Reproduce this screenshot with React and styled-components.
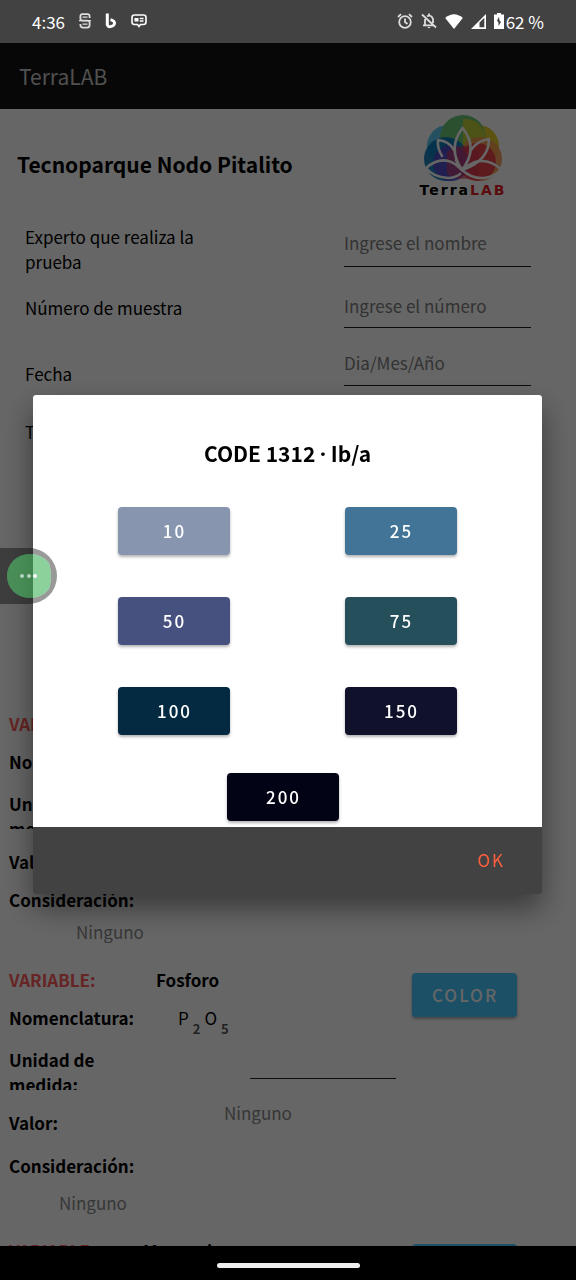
import React from "react";
import styled, { createGlobalStyle } from "styled-components";

const GlobalStyle = createGlobalStyle`
  * { box-sizing: border-box; }
  body { margin: 0; background: #fff; color: #000; font-family: "Noto Sans CJK SC", "Noto Sans", sans-serif; font-size: 17px; line-height: 25px; }
  button, input { font: inherit; }
  p, h1, h2 { margin: 0; }
`;

const Screen = styled.div`
  height: 100vh;
  display: flex;
  flex-direction: column;
  overflow: hidden;
`;

const StatusBar = styled.div`
  position: relative;
  z-index: 3;
  flex: none;
  height: 43px;
  padding: 0 32px 1px;
  display: flex;
  align-items: center;
  justify-content: space-between;
  background: #424242;
  color: #fff;
`;

const StatusGroup = styled.div`
  display: flex;
  align-items: center;
  gap: ${(p) => p.$gap}px;
`;

const Battery = styled.span`
  display: flex;
  align-items: center;
  gap: 2px;
`;

const AppBar = styled.header`
  flex: none;
  height: 66px;
  padding: 0 19px;
  display: flex;
  align-items: center;
  background: #121212;
  color: #c8c8c8;
  font-size: 21px;
`;

const Content = styled.main`
  flex: 1;
  min-height: 0;
  overflow: hidden;
`;

const TitleRow = styled.div`
  height: 110px;
  padding: 5px 70px 0 17px;
  display: flex;
  align-items: flex-start;
  justify-content: space-between;
`;

const Title = styled.h1`
  padding-top: 35px;
  font-size: 21px;
  line-height: 30px;
`;

const Logo = styled.div`
  width: 86px;
  display: flex;
  flex-direction: column;
  align-items: center;
  svg { display: block; }
`;

const LogoText = styled.span`
  font: bold 14px/16px "DejaVu Sans", sans-serif;
  letter-spacing: 2px;
  b { color: #e31b23; }
`;

const FormRow = styled.div`
  height: ${(p) => p.$h}px;
  padding: 0 45px 0 25px;
  display: flex;
  justify-content: space-between;
`;

const FormLabel = styled.label`
  width: 190px;
  padding-top: ${(p) => p.$top}px;
`;

const Field = styled.input`
  width: 187px;
  height: ${(p) => p.$h || 41}px;
  padding: 0 0 ${(p) => p.$bottom || 0}px;
  border: 0;
  border-bottom: 1px solid #222;
  border-radius: 0;
  background: none;
  outline: none;
  &::placeholder { color: #808080; opacity: 1; }
`;

const Variables = styled.div`
  padding-top: 190px;
  display: flex;
  flex-direction: column;
  gap: 16px;
`;

const Variable = styled.section`
  display: grid;
  grid-template-columns: minmax(0, 1fr) 164px;
  align-items: start;
`;

const VarRow = styled.div`
  height: ${(p) => p.$h || 38}px;
  padding: ${(p) => p.$top || 0}px 16px 0 9px;
  display: flex;
  align-items: ${(p) => p.$align || "center"};
  overflow: hidden;
`;

const Term = styled.span`
  flex: none;
  width: ${(p) => p.$w || 147}px;
  font-weight: bold;
  color: ${(p) => (p.$red ? "#ff5a5a" : "#000")};
`;

const UnitLabel = styled.label`
  width: 110px;
  font-weight: bold;
`;

const UnitField = styled(Field)`
  margin-left: auto;
  width: 146px;
  height: 32px;
`;

const Value = styled.span`
  display: block;
  padding-top: 10px;
`;

const Hint = styled.span`
  color: #8a8a8a;
  padding-left: ${(p) => p.$left || 0}px;
`;

const Formula = styled.span`
  padding-left: 22px;
  display: flex;
  gap: 4px;
  sub {
    position: relative;
    top: 11px;
    vertical-align: baseline;
    font-size: 13px;
    font-weight: bold;
    color: #555;
  }
`;

const RaisedButton = styled.button`
  height: ${(p) => p.$h || 48}px;
  width: ${(p) => p.$w || 112}px;
  padding: 0 0 2px 1px;
  border: 0;
  border-radius: 4px;
  background: ${(p) => p.$color};
  color: #fff;
  font-weight: 500;
  letter-spacing: 2px;
  box-shadow: 0 2px 3px rgba(0, 0, 0, 0.3);
`;

const ColorButton = styled(RaisedButton)`
  margin-top: 13px;
`;

const Scrim = styled.div`
  position: fixed;
  inset: 43px 0 34px;
  z-index: 2;
  padding: 0 34px 0 33px;
  display: flex;
  align-items: center;
  background: rgba(0, 0, 0, 0.6);
`;

const Dialog = styled.div`
  width: 100%;
  border-radius: 3px;
  overflow: hidden;
  background: #424242;
  box-shadow: 0 14px 30px rgba(0, 0, 0, 0.45);
`;

const DialogBody = styled.div`
  padding: 43px 0 6px;
  background: #fff;
`;

const DialogTitle = styled.h2`
  font-size: 21px;
  line-height: 30px;
  text-align: center;
`;

const Dot = styled.span`
  font-family: "Noto Sans", sans-serif;
  line-height: 1;
`;

const Swatches = styled.div`
  padding: 39px 85px 38px;
  display: grid;
  grid-template-columns: auto auto;
  justify-content: space-between;
  gap: 42px 0;
`;

const LastSwatch = styled.div`
  display: flex;
  justify-content: center;
  padding-right: 9px;
`;

const DialogActions = styled.div`
  height: 67px;
  padding: 0 29px 2px;
  display: flex;
  align-items: center;
  justify-content: flex-end;
`;

const TextButton = styled.button`
  padding: 8px;
  border: 0;
  background: none;
  color: #ff5f3d;
  letter-spacing: 2px;
`;

const FloatingTool = styled.button`
  position: fixed;
  left: 0;
  top: 548px;
  z-index: 4;
  padding: 0;
  border: 0;
  background: none;
  svg { display: block; }
`;

const NavBar = styled.div`
  flex: none;
  height: 34px;
  padding-top: 4px;
  display: flex;
  align-items: center;
  justify-content: center;
  background: #000;
`;

const NavHandle = styled.div`
  width: 143px;
  height: 5px;
  border-radius: 3px;
  background: #eee;
`;

const StripeS = () => (
  <svg width="12" height="16" viewBox="0 0 12 16" fill="none" stroke="#ddd" strokeWidth="1.8">
    <path d="M10.600 5V3.200Q10.600 1.200 8.600 1.200H3.400Q1.400 1.200 1.400 3.200V5.200Q1.400 7.600 3.600 7.600H8.400Q10.600 7.600 10.600 9.600V12Q10.600 14.600 8 14.600H4Q1.400 14.600 1.400 12V11" />
    <path d="M3.500 4.200h5M0 7.600h12M3.500 11.200h5" strokeWidth="1.200" />
  </svg>
);

const BingB = () => (
  <svg width="12" height="16" viewBox="0 0 12 16" fill="none" stroke="#fff" strokeWidth="3">
    <path d="M2.300.500V12" />
    <path d="M2.300 11Q2.300 14 5.500 13.700 9.600 13 9.600 9.800 9.300 7.700 5.500 6.600" strokeWidth="2.800" />
  </svg>
);

const ChatCard = () => (
  <svg width="16" height="14" viewBox="0 0 16 14" fill="none" stroke="#fff" strokeWidth="1.600">
    <path d="M3.500 1h9q2.500 0 2.500 2.500v4.500q0 2.500-2.500 2.500h-3L8 12.500l-1.500-2h-3Q1 10.500 1 8V3.500Q1 1 3.500 1z" />
    <path d="M3.500 4h4v3.500h-4z" fill="#fff" stroke="none" />
    <path d="M8.800 4.500h3.700M8.800 7h3.700" strokeWidth="1.300" />
  </svg>
);

const Alarm = () => (
  <svg width="16" height="16" viewBox="0 0 16 16" fill="none" stroke="#ddd" strokeWidth="1.800">
    <circle cx="8" cy="9" r="5.800" />
    <path d="M8 5.500V9l2.500 2M1 4l3-2.800M15 4l-3-2.800" />
  </svg>
);

const BellOff = () => (
  <svg width="16" height="16" viewBox="0 0 16 16" fill="none" stroke="#ddd" strokeWidth="1.800">
    <path d="M4 6v6.300h8.500M2 12.300H4M6 3.300q4.300-2 6 2.700v4M8 .5v2M1 1.500l14 13" />
    <path d="M6.500 14h3q-1.500 2.500-3 0z" fill="#ddd" stroke="none" />
  </svg>
);

const Wifi = () => (
  <svg width="18" height="15" viewBox="0 0 18 15" fill="#fff">
    <path d="M9 15 .2 4Q9-3.500 17.800 4z" />
  </svg>
);

const Signal = () => (
  <svg width="15" height="15" viewBox="0 0 15 15">
    <path d="M15 0v15H0z" fill="#fff" />
    <path d="M8.500 8.500 13.300 3.700V13.300H8.500z" fill="#424242" />
  </svg>
);

const BatteryIcon = () => (
  <svg width="10" height="16" viewBox="0 0 10 16">
    <path d="M3 0h4v1.500h3V16H0V1.500h3z" fill="#fff" />
    <path d="M5 4 3 7.500 4.500 9.500V13L7 9 5.500 7.500z" fill="#424242" />
  </svg>
);

const Lotus = () => (
  <svg width="80" height="68" viewBox="0 0 80 68">
    <circle cx="25" cy="32" r="21" fill="#5cc8f0" />
    <circle cx="55" cy="32" r="21" fill="#e8d028" />
    <circle cx="40" cy="24" r="23" fill="#6cc878" />
    <path d="M40 5A21 21 0 0 1 63 24Q60 42 40 46Z" fill="#c0cc38" />
    <circle cx="57" cy="45" r="22" fill="#f59a50" fillOpacity="0.9" />
    <circle cx="23" cy="45" r="22" fill="#0878b8" fillOpacity="0.9" />
    <circle cx="54" cy="48" r="19" fill="#e83a48" fillOpacity="0.9" />
    <circle cx="28" cy="49" r="18" fill="#5548c8" fillOpacity="0.9" />
    <path d="M24 38Q40 26 56 38V60Q40 70 24 60Z" fill="#d83858" fillOpacity="0.6" />
    <g fill="none" stroke="#fff" strokeWidth="2.600" strokeLinecap="round" strokeLinejoin="round">
      <path d="M39 56Q24 34 39.500 14Q56 34 39 56Z" />
      <path d="M19 42Q14 34 15 26Q26 27 31 36M48 36Q54 27 66 25Q66 47 39 56" />
      <path d="M37 60Q32 64 25 64Q10 63 3 54Q18 41 32 50L39 56Q49 65 61 64Q72 63 78 55Q65 44 52 48Q45 51 39 56Q35 51 33 46" />
    </g>
  </svg>
);

function VariableBlock({ name, unitId, unitHeight, considerationHeight, hintLeft, termWidth, children }) {
  return (
    <Variable>
      <div>
        <VarRow>
          <Term $red $w={termWidth}>VARIABLE:</Term>
          <Term>{name}</Term>
        </VarRow>
        <VarRow>
          <Term>Nomenclatura:</Term>
          {children}
        </VarRow>
        <VarRow $h={unitHeight} $top={11} $align="flex-start">
          <UnitLabel htmlFor={unitId}>Unidad de medida:</UnitLabel>
          <UnitField id={unitId} />
        </VarRow>
        <VarRow $h={51} $align="flex-start" $top={10}>
          <Term $w={215}><Value>Valor:</Value></Term>
          <Hint>Ninguno</Hint>
        </VarRow>
        <VarRow $h={considerationHeight}>
          <Term>Consideración:</Term>
        </VarRow>
        <VarRow $h={26}>
          <Hint $left={hintLeft}>Ninguno</Hint>
        </VarRow>
      </div>
      <ColorButton type="button" $w={105} $h={44} $color="#44c8ff">COLOR</ColorButton>
    </Variable>
  );
}

const swatches = [
  ["10", "#8796ae"],
  ["25", "#427497"],
  ["50", "#475180"],
  ["75", "#264f5c"],
  ["100", "#042a42"],
  ["150", "#10122c"],
];

export default function App() {
  return (
    <Screen>
      <GlobalStyle />
      <StatusBar>
        <StatusGroup $gap={14}>
          <span>4:36</span>
          <StripeS />
          <BingB />
          <ChatCard />
        </StatusGroup>
        <StatusGroup $gap={8}>
          <Alarm />
          <BellOff />
          <Wifi />
          <Signal />
          <Battery><BatteryIcon />62 %</Battery>
        </StatusGroup>
      </StatusBar>
      <AppBar>TerraLAB</AppBar>
      <Content>
        <TitleRow>
          <Title>Tecnoparque Nodo Pitalito</Title>
          <Logo>
            <Lotus />
            <LogoText>Terra<b>LAB</b></LogoText>
          </Logo>
        </TitleRow>
        <FormRow $h={66}>
          <FormLabel htmlFor="experto" $top={5}>Experto que realiza la prueba</FormLabel>
          <Field id="experto" placeholder="Ingrese el nombre" $h={48} />
        </FormRow>
        <FormRow $h={61}>
          <FormLabel htmlFor="numero" $top={10}>Número de muestra</FormLabel>
          <Field id="numero" placeholder="Ingrese el número" $h={43} $bottom={2} />
        </FormRow>
        <FormRow $h={58}>
          <FormLabel htmlFor="fecha" $top={15}>Fecha</FormLabel>
          <Field id="fecha" placeholder="Dia/Mes/Año" $h={40} $bottom={6} />
        </FormRow>
        <FormRow $h={110}>
          <FormLabel as="p" $top={15}>Tipo</FormLabel>
        </FormRow>
        <Variables>
          <VariableBlock name="" unitId="unidad-1" unitHeight={49} considerationHeight={38} hintLeft={67} />
          <VariableBlock name="Fosforo" unitId="unidad-2" unitHeight={54} considerationHeight={48} hintLeft={50}>
            <Formula>P<sub>2</sub>O<sub>5</sub></Formula>
          </VariableBlock>
          <VariableBlock name="Magnesio" termWidth={134} unitId="unidad-3" unitHeight={54} considerationHeight={48} hintLeft={50} />
        </Variables>
      </Content>
      <NavBar><NavHandle /></NavBar>
      <Scrim>
        <Dialog role="dialog" aria-modal="true" aria-labelledby="code-title">
          <DialogBody>
            <DialogTitle id="code-title">CODE 1312 <Dot>·</Dot> Ib/a</DialogTitle>
            <Swatches>
              {swatches.map(([value, color]) => (
                <RaisedButton type="button" key={value} $color={color}>{value}</RaisedButton>
              ))}
            </Swatches>
            <LastSwatch>
              <RaisedButton type="button" $color="#030316">200</RaisedButton>
            </LastSwatch>
          </DialogBody>
          <DialogActions>
            <TextButton type="button">OK</TextButton>
          </DialogActions>
        </Dialog>
      </Scrim>
      <FloatingTool type="button" aria-label="Más opciones">
        <svg width="58" height="56" viewBox="0 0 58 56">
          <path fillRule="evenodd" fill="#000" fillOpacity="0.4" d="M0 0H29A28 28 0 0 1 29 56H0ZM29 6A22 22 0 0 0 29 50Q42 50 49 41Q53 28 49 15Q42 6 29 6Z" />
          <path fill="#35ac4f" fillOpacity="0.57" d="M29 6A22 22 0 0 0 29 50Q42 50 49 41Q53 28 49 15Q42 6 29 6Z" />
          <circle cx="22" cy="28" r="2" fill="#fff" fillOpacity="0.6" />
          <circle cx="29" cy="28" r="2" fill="#fff" fillOpacity="0.6" />
          <circle cx="35" cy="28" r="2" fill="#fff" />
        </svg>
      </FloatingTool>
    </Screen>
  );
}
